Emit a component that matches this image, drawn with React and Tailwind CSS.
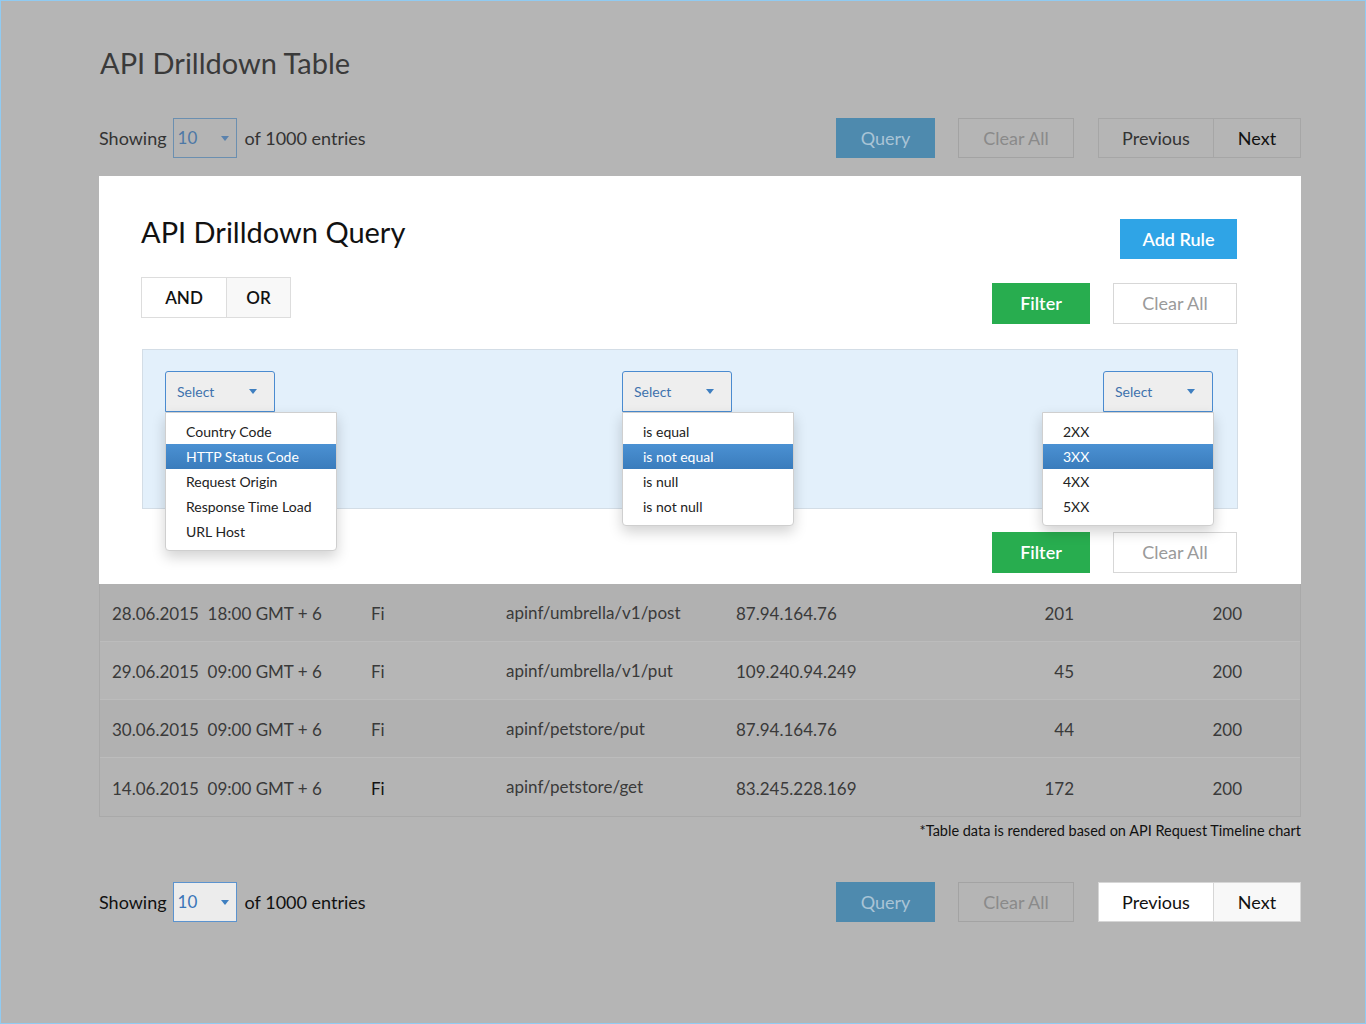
import React from "react";

const FONT = { fontFamily: "Lato, 'Noto Sans', 'Liberation Sans', sans-serif" };

function Caret({ color = "#3f7fc0" }) {
  return (
    <svg width="8" height="5" viewBox="0 0 8 5" className="shrink-0">
      <path d="M0 0 L8 0 L4 5 Z" fill={color} />
    </svg>
  );
}

function PageSelect({ dim }) {
  return (
    <div
      className={
        dim
          ? "w-[64px] h-[40px] border border-[#6b8fb0] bg-[#b4b4b4] flex items-center justify-between pl-[4px] pr-[7px]"
          : "w-[64px] h-[40px] border border-[#5b93cf] bg-[#ececec] flex items-center justify-between pl-[4px] pr-[7px]"
      }
    >
      <span className={dim ? "text-[17px] text-[#4d78a6]" : "text-[17px] text-[#3a75b8]"}>10</span>
      <Caret color={dim ? "#5a82ad" : "#3f7fc0"} />
    </div>
  );
}

function PagerRow({ dim }) {
  return (
    <div className="flex items-center h-[40px]">
      <span className={dim ? "text-[18px] text-[#333333]" : "text-[18px] text-[#111111]"}>Showing</span>
      <div className="ml-[6px]">
        <PageSelect dim={dim} />
      </div>
      <span className={dim ? "ml-[8px] text-[18px] text-[#333333]" : "ml-[8px] text-[18px] text-[#111111]"}>
        of 1000 entries
      </span>
      <div className="ml-auto flex items-center">
        <div className="w-[99px] h-[40px] bg-[#4e8aae] flex items-center justify-center text-[18px] text-[#a9c4d6]">
          Query
        </div>
        <div className="ml-[23px] w-[116px] h-[40px] border border-[#a3a3a3] flex items-center justify-center text-[18px] text-[#8a8a8a]">
          Clear All
        </div>
        <div className="ml-[24px] flex h-[40px]">
          <div
            className={
              dim
                ? "w-[116px] border border-[#a6a6a6] flex items-center justify-center text-[18px] text-[#333333]"
                : "w-[116px] border border-[#d6d6d6] bg-white flex items-center justify-center text-[18px] text-[#111111]"
            }
          >
            Previous
          </div>
          <div
            className={
              dim
                ? "w-[87px] border border-l-0 border-[#a6a6a6] flex items-center justify-center text-[18px] text-[#111111]"
                : "w-[87px] border border-l-0 border-[#d6d6d6] bg-[#f8f8f8] flex items-center justify-center text-[18px] text-[#111111]"
            }
          >
            Next
          </div>
        </div>
      </div>
    </div>
  );
}

function Dropdown({ items, active, menuWidth = 172, menuLeft = 0 }) {
  return (
    <div className="relative w-[110px]">
      <div className="h-[41px] w-[110px] bg-[#eeeeee] border border-[#4a8bd0] rounded-t-[3px] flex items-center justify-between pl-[11px] pr-[17px]">
        <span className="text-[14px] text-[#3f72ad]">Select</span>
        <Caret />
      </div>
      <div
        className="absolute top-[41px] z-10 bg-white border border-[#cfcfcf] rounded-b-[4px] shadow-[0_6px_14px_rgba(0,0,0,0.18)] pt-[6px] pb-[6px]"
        style={{ width: menuWidth, left: menuLeft }}
      >
        {items.map((it, i) => (
          <div
            key={it}
            className={
              i === active
                ? "h-[25px] flex items-center pl-[20px] text-[14px] text-white bg-gradient-to-b from-[#4b91d3] to-[#3a7cbc]"
                : "h-[25px] flex items-center pl-[20px] text-[14px] text-[#222222]"
            }
          >
            {it}
          </div>
        ))}
      </div>
    </div>
  );
}

function FilterButtons() {
  return (
    <div className="flex items-center">
      <div className="w-[98px] h-[41px] bg-[#28ad4f] flex items-center justify-center text-[18px] font-semibold text-white">
        Filter
      </div>
      <div className="ml-[23px] w-[124px] h-[41px] border border-[#d7d7d7] flex items-center justify-center text-[18px] text-[#9a9a9a]">
        Clear All
      </div>
    </div>
  );
}

const rows = [
  ["28.06.2015  18:00 GMT + 6", "Fi", "apinf/umbrella/v1/post", "87.94.164.76", "201", "200", "bg-[#b1b1b1]"],
  ["29.06.2015  09:00 GMT + 6", "Fi", "apinf/umbrella/v1/put", "109.240.94.249", "45", "200", "bg-[#b6b6b6]"],
  ["30.06.2015  09:00 GMT + 6", "Fi", "apinf/petstore/put", "87.94.164.76", "44", "200", "bg-[#b1b1b1]"],
  ["14.06.2015  09:00 GMT + 6", "Fi", "apinf/petstore/get", "83.245.228.169", "172", "200", "bg-[#b4b4b4]"],
];

export default function App() {
  return (
    <div
      className="w-[1366px] h-[1024px] bg-[#b5b5b5] border border-[#90cbf2] overflow-hidden"
      style={FONT}
    >
      <div className="ml-[98px] w-[1202px] pt-[44px]">
        <h1 className="text-[29px] leading-[36px] text-[#3a3a3a] ml-[1px] font-normal">API Drilldown Table</h1>

        <div className="mt-[37px]">
          <PagerRow dim />
        </div>

        {/* Query card */}
        <div className="mt-[18px] bg-white w-[1202px] h-[408px] pt-[38px] pl-[42px] pr-[64px]">
          <div className="flex justify-between">
            <div>
              <h2 className="text-[29px] leading-[36px] text-[#111111] font-normal">API Drilldown Query</h2>
              <div className="mt-[27px] flex h-[41px]">
                <div className="w-[86px] border border-[#dddddd] bg-white flex items-center justify-center text-[17px] font-semibold text-[#111111]">
                  AND
                </div>
                <div className="w-[64px] border border-l-0 border-[#dddddd] bg-[#f8f8f8] flex items-center justify-center text-[17px] font-semibold text-[#111111]">
                  OR
                </div>
              </div>
            </div>
            <div className="flex flex-col items-end mt-[5px]">
              <div className="w-[117px] h-[40px] bg-[#2fa4e6] flex items-center justify-center text-[18px] font-semibold text-white">
                Add Rule
              </div>
              <div className="mt-[24px]">
                <FilterButtons />
              </div>
            </div>
          </div>

          <div className="mt-[25px] ml-[1px] w-[1096px] h-[160px] bg-[#e3f0fb] border border-[#d3dde6] pt-[21px] pl-[22px] pr-[24px]">
            <div className="flex items-start">
              <Dropdown
                items={["Country Code", "HTTP Status Code", "Request Origin", "Response Time Load", "URL Host"]}
                active={1}
              />
              <div className="ml-[347px]">
                <Dropdown items={["is equal", "is not equal", "is null", "is not null"]} active={1} />
              </div>
              <div className="ml-auto">
                <Dropdown items={["2XX", "3XX", "4XX", "5XX"]} active={1} menuLeft={-61} />
              </div>
            </div>
          </div>

          <div className="mt-[23px] flex justify-end">
            <FilterButtons />
          </div>
        </div>

        {/* Table */}
        <div className="w-[1202px] border-l border-r border-b border-[#a9a9a9]">
          {rows.map((r, i) => (
            <div
              key={i}
              className={
                "h-[58px] pt-[3px] flex items-center pl-[12px] text-[17px] text-[#3a3a3a] border-b border-[#bcbcbc] last:border-b-0 " +
                r[6]
              }
            >
              <span className="w-[259px] whitespace-pre">{r[0]}</span>
              <span className={i === 3 ? "w-[135px] text-[#111111]" : "w-[135px]"}>{r[1]}</span>
              <span className="w-[230px] -mt-[3px]">{r[2]}</span>
              <span className="w-[200px]">{r[3]}</span>
              <span className="w-[138px] text-right">{r[4]}</span>
              <span className="w-[168px] text-right">{r[5]}</span>
            </div>
          ))}
        </div>

        <div className="mt-[4px] text-right text-[14.5px] leading-[20px] text-[#111111]">
          *Table data is rendered based on API Request Timeline chart
        </div>

        <div className="mt-[41px]">
          <PagerRow />
        </div>
      </div>
    </div>
  );
}
